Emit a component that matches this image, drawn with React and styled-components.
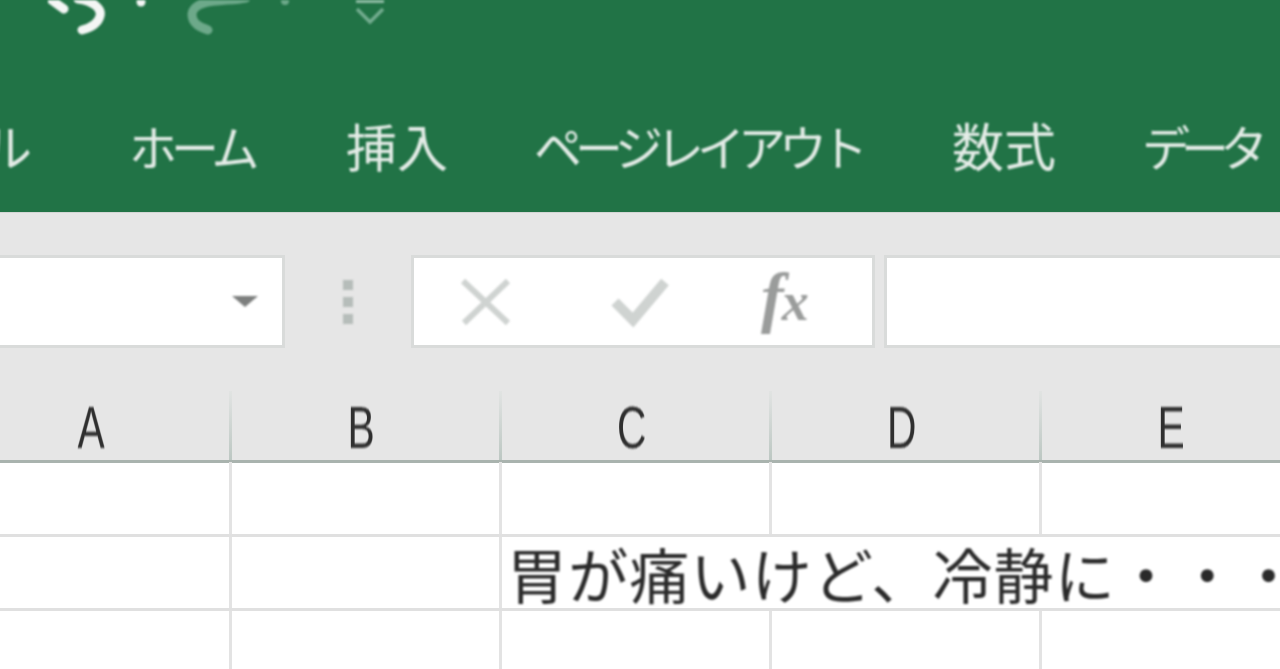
import React from "react";
import styled, { createGlobalStyle } from "styled-components";

const Global = createGlobalStyle`
  html, body { margin: 0; padding: 0; height: 100%; overflow: hidden; background: #fff; }
  #root { width: 1280px; height: 669px; overflow: hidden; }
`;

const JP = `"Noto Sans CJK JP", "Noto Sans", sans-serif`;

const Page = styled.div`
  width: 1280px;
  height: 669px;
  display: flex;
  flex-direction: column;
  overflow: hidden;
  background: #fff;
  font-family: ${JP};
`;

const Ribbon = styled.header`
  height: 212px;
  flex: none;
  background: #217346;
  display: flex;
  flex-direction: column;
`;

const QuickAccess = styled.div`
  height: 40px;
  flex: none;
  display: flex;
  align-items: flex-start;
  padding-left: 48px;
  overflow: hidden;
`;

const QuickIcon = styled.svg`
  flex: none;
  margin-left: ${(p) => p.$gap}px;
  filter: blur(1px);
`;

const Tabs = styled.nav`
  flex: none;
  display: flex;
  align-items: flex-start;
  margin-left: -18px;
  padding-top: 75px;
`;

const Tab = styled.span`
  flex: none;
  width: ${(p) => p.$w}px;
  margin-left: ${(p) => p.$gap}px;
  font-size: ${(p) => p.$size}px;
  line-height: 60px;
  letter-spacing: ${(p) => p.$track}px;
  color: #e4ece7;
  white-space: nowrap;
  filter: blur(0.9px);
`;

const FormulaArea = styled.section`
  height: 250px;
  flex: none;
  background: #e6e6e6;
  border-top: 1px solid #d4d6d5;
  box-sizing: border-box;
  padding-top: 42px;
`;

const FormulaRow = styled.div`
  display: flex;
  height: 93px;
  margin-left: -10px;
`;

const Field = styled.div`
  flex: none;
  width: ${(p) => p.$w}px;
  margin-left: ${(p) => p.$gap}px;
  background: #fff;
  border: 3px solid #d9dbda;
  box-sizing: border-box;
  display: flex;
  align-items: center;
`;

const NameBox = styled(Field)`
  justify-content: flex-end;
  padding-right: 24px;
`;

const Caret = styled.i`
  width: 0;
  height: 0;
  border-left: 13px solid transparent;
  border-right: 13px solid transparent;
  border-top: 11px solid #7d7f7e;
  filter: blur(0.8px);
`;

const Grip = styled.div`
  flex: none;
  width: 14px;
  margin-left: 56px;
  display: flex;
  flex-direction: column;
  align-items: center;
  justify-content: center;
  gap: 7px;
`;

const GripDot = styled.i`
  width: 10px;
  height: 10px;
  background: #b6bdba;
  filter: blur(0.8px);
`;

const FormulaTools = styled(Field)`
  padding-left: 44px;
`;

const ToolIcon = styled.svg`
  flex: none;
  margin-left: ${(p) => p.$gap}px;
  filter: blur(0.9px);
`;

const Fx = styled.span`
  flex: none;
  margin-left: 90px;
  margin-top: -4px;
  font-family: "Liberation Serif", serif;
  font-style: italic;
  font-weight: 700;
  font-size: 68px;
  line-height: 70px;
  letter-spacing: -2px;
  color: #9a9c9b;
  filter: blur(0.9px);
`;

const SmallX = styled.span`
  font-size: 54px;
`;

const ColumnHeader = styled.div`
  display: flex;
  height: 72px;
  margin-top: 43px;
  margin-left: -38px;
  border-bottom: 3px solid #a9b3ae;
  box-sizing: border-box;
  margin-right: -300px;
`;

const ColumnCell = styled.div`
  flex: none;
  width: 270px;
  box-sizing: border-box;
  display: flex;
  align-items: center;
  justify-content: center;
  border-right: 3px solid;
  border-image: linear-gradient(#e2e4e3, #bcc7c2) 1;
  padding: 4px 8px 0 0;
`;

const ColumnLetter = styled.span`
  font-family: "Liberation Sans", sans-serif;
  font-size: 60px;
  line-height: 60px;
  color: #2f2f2f;
  display: block;
  transform: scaleX(0.68);
  filter: blur(0.8px);
`;

const Sheet = styled.section`
  flex: 1;
  display: flex;
  flex-direction: column;
  margin-left: -38px;
  margin-right: -300px;
`;

const SheetRow = styled.div`
  display: flex;
  flex: none;
  height: ${(p) => p.$h}px;
  border-bottom: ${(p) => (p.$last ? "0" : "3px solid #e0e0e0")};
  box-sizing: border-box;
`;

const SheetCell = styled.div`
  flex: none;
  width: 270px;
  box-sizing: border-box;
  border-right: 3px solid ${(p) => (p.$open ? "transparent" : "#e3e3e3")};
  min-width: 0;
`;

const CellText = styled.span`
  display: block;
  white-space: nowrap;
  font-size: 60px;
  line-height: 72px;
  letter-spacing: 1.2px;
  padding-left: 5px;
  color: #2a2a2a;
  filter: blur(0.8px);
`;

const cols = ["A", "B", "C", "D", "E", "F"];

export default function App() {
  return (
    <Page>
      <Global />
      <Ribbon>
        <QuickAccess>
          <QuickIcon $gap={0} width="60" height="36" viewBox="0 0 60 36" fill="none">
            <path d="M2 -1 L16 9 M30 -1 C46 1 54 9 52 16 C50 24 42 28 34 30" stroke="#f4f6f5" strokeWidth="9" strokeLinecap="round" />
          </QuickIcon>
          <QuickIcon $gap={26} width="14" height="10" viewBox="0 0 14 10">
            <circle cx="7" cy="2" r="4.5" fill="#f4f6f5" />
          </QuickIcon>
          <QuickIcon $gap={38} width="64" height="36" viewBox="0 0 64 36" fill="none">
            <path d="M60 -2 C40 2 8 -2 6 14 C6 24 14 27 22 30" stroke="#6da98a" strokeWidth="9" strokeLinecap="round" />
          </QuickIcon>
          <QuickIcon $gap={30} width="10" height="8" viewBox="0 0 10 8">
            <circle cx="5" cy="1" r="4" fill="#6da98a" />
          </QuickIcon>
          <QuickIcon $gap={64} width="32" height="26" viewBox="0 0 32 26" fill="none">
            <path d="M2 1 H30" stroke="#8fbca4" strokeWidth="4" />
            <path d="M3 9 L16 22 L29 9" stroke="#74ad90" strokeWidth="3.5" />
          </QuickIcon>
        </QuickAccess>
        <Tabs>
          <Tab $w={58} $gap={0} $size={50} $track={-8}>ル</Tab>
          <Tab $w={124} $gap={89} $size={48} $track={-6}>ホーム</Tab>
          <Tab $w={100} $gap={93} $size={51} $track={0}>挿入</Tab>
          <Tab $w={328} $gap={88} $size={48} $track={-7}>ページレイアウト</Tab>
          <Tab $w={102} $gap={90} $size={52} $track={0}>数式</Tab>
          <Tab $w={120} $gap={88} $size={48} $track={-9}>データ</Tab>
        </Tabs>
      </Ribbon>
      <FormulaArea>
        <FormulaRow>
          <NameBox $w={295} $gap={0}>
            <Caret />
          </NameBox>
          <Grip>
            <GripDot />
            <GripDot />
            <GripDot />
          </Grip>
          <FormulaTools $w={464} $gap={56}>
            <ToolIcon $gap={0} width="56" height="52" viewBox="0 0 56 52" fill="none">
              <path d="M5 5 L50 47 M50 5 L6 47" stroke="#cfd3d1" strokeWidth="6" />
            </ToolIcon>
            <ToolIcon $gap={97} width="60" height="52" viewBox="0 0 60 52" fill="none">
              <path d="M4 26 L22 44 L54 6" stroke="#cfd3d1" strokeWidth="10" />
            </ToolIcon>
            <Fx>f<SmallX>x</SmallX></Fx>
          </FormulaTools>
          <Field $w={420} $gap={9} />
        </FormulaRow>
        <ColumnHeader>
          {cols.map((c) => (
            <ColumnCell key={c}>
              <ColumnLetter>{c}</ColumnLetter>
            </ColumnCell>
          ))}
        </ColumnHeader>
      </FormulaArea>
      <Sheet>
        <SheetRow $h={75}>
          {cols.map((c) => <SheetCell key={c} />)}
        </SheetRow>
        <SheetRow $h={74}>
          {cols.map((c, i) => (
            <SheetCell key={c} $open={i >= 2}>
              {i === 2 && <CellText>胃が痛いけど、冷静に・・・</CellText>}
            </SheetCell>
          ))}
        </SheetRow>
        <SheetRow $h={70} $last>
          {cols.map((c) => <SheetCell key={c} />)}
        </SheetRow>
      </Sheet>
    </Page>
  );
}
